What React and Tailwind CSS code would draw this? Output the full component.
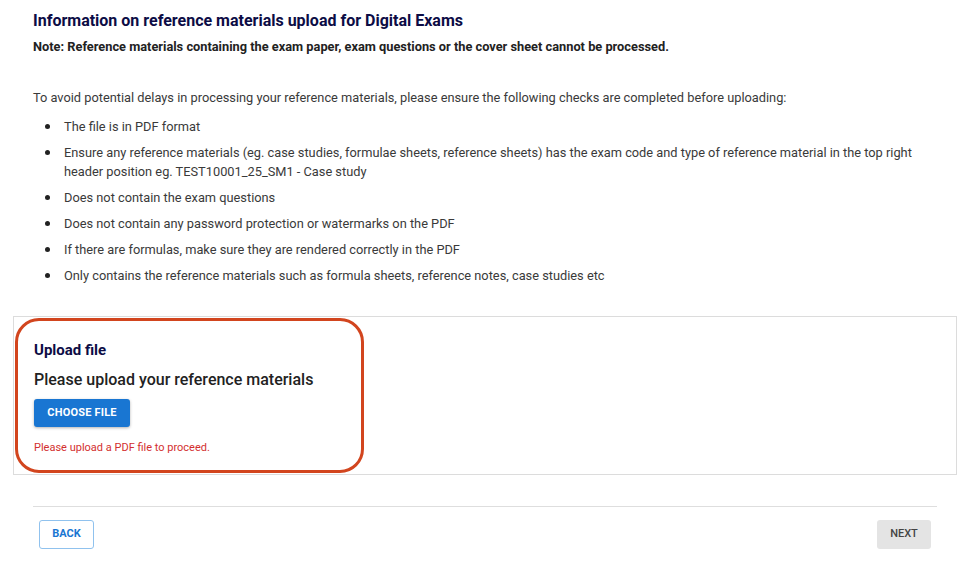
export default function App() {
  const checks = [
    "The file is in PDF format",
    "Ensure any reference materials (eg. case studies, formulae sheets, reference sheets) has the exam code and type of reference material in the top right header position eg. TEST10001_25_SM1 - Case study",
    "Does not contain the exam questions",
    "Does not contain any password protection or watermarks on the PDF",
    "If there are formulas, make sure they are rendered correctly in the PDF",
    "Only contains the reference materials such as formula sheets, reference notes, case studies etc",
  ];

  return (
    <div className="min-h-screen w-[970px] bg-white font-['Roboto',sans-serif] text-[#333]">
      {/* Intro */}
      <div className="px-[33px] pt-[11px]">
        <h1 className="text-[16px] font-bold leading-[20px] text-[#0c0c45]">
          Information on reference materials upload for Digital Exams
        </h1>
        <p className="mt-[8px] text-[12.8px] font-bold leading-[16px] text-[#222]">
          Note: Reference materials containing the exam paper, exam questions or the cover sheet cannot be processed.
        </p>
        <p className="mt-[34px] text-[12.8px] leading-[17px] text-[#3a3a3a]">
          To avoid potential delays in processing your reference materials, please ensure the following checks are completed before uploading:
        </p>
        <ul className="mt-[11px] flex flex-col gap-[7px] pr-[8px] text-[12.8px] leading-[19px] text-[#3a3a3a]">
          {checks.map((c) => (
            <li key={c} className="flex">
              <span className="flex h-[19px] w-[31px] shrink-0 items-center pl-[12px]">
                <span className="h-[5px] w-[5px] rounded-full bg-[#222]" />
              </span>
              <span>{c}</span>
            </li>
          ))}
        </ul>
      </div>

      {/* Upload panel */}
      <div className="mx-[13px] mt-[31px] h-[159px] w-[944px] border border-[#dcdcdc] p-px">
        <div className="flex h-[155px] w-[349px] flex-col rounded-[24px] border-[3px] border-[#d2451e] pl-[16px] pt-[20px]">
          <h2 className="text-[15px] font-bold leading-[18px] text-[#0c0c45]">Upload file</h2>
          <p className="mt-[11px] text-[16px] font-medium leading-[20px] text-[#222]">
            Please upload your reference materials
          </p>
          <button className="mt-[9px] h-[28px] w-[96px] rounded-[3px] bg-[#1976d2] text-[11px] font-bold tracking-[0.2px] text-white shadow-[0_1px_3px_rgba(0,0,0,0.3)]">
            CHOOSE FILE
          </button>
          <p className="mt-[14px] text-[11px] leading-[14px] text-[#d32f2f]">
            Please upload a PDF file to proceed.
          </p>
        </div>
      </div>

      {/* Footer nav */}
      <div className="mx-[33px] mt-[31px] w-[904px] border-t border-[#dedede]">
        <div className="flex items-center justify-between pl-[6px] pr-[6px] pt-[13px]">
          <button className="h-[29px] w-[55px] rounded-[3px] border border-[#90c2ee] text-[11px] font-bold text-[#1976d2]">
            BACK
          </button>
          <button className="h-[29px] w-[54px] rounded-[3px] bg-[#e4e4e4] text-[11px] font-medium text-[#444]">
            NEXT
          </button>
        </div>
      </div>
    </div>
  );
}
